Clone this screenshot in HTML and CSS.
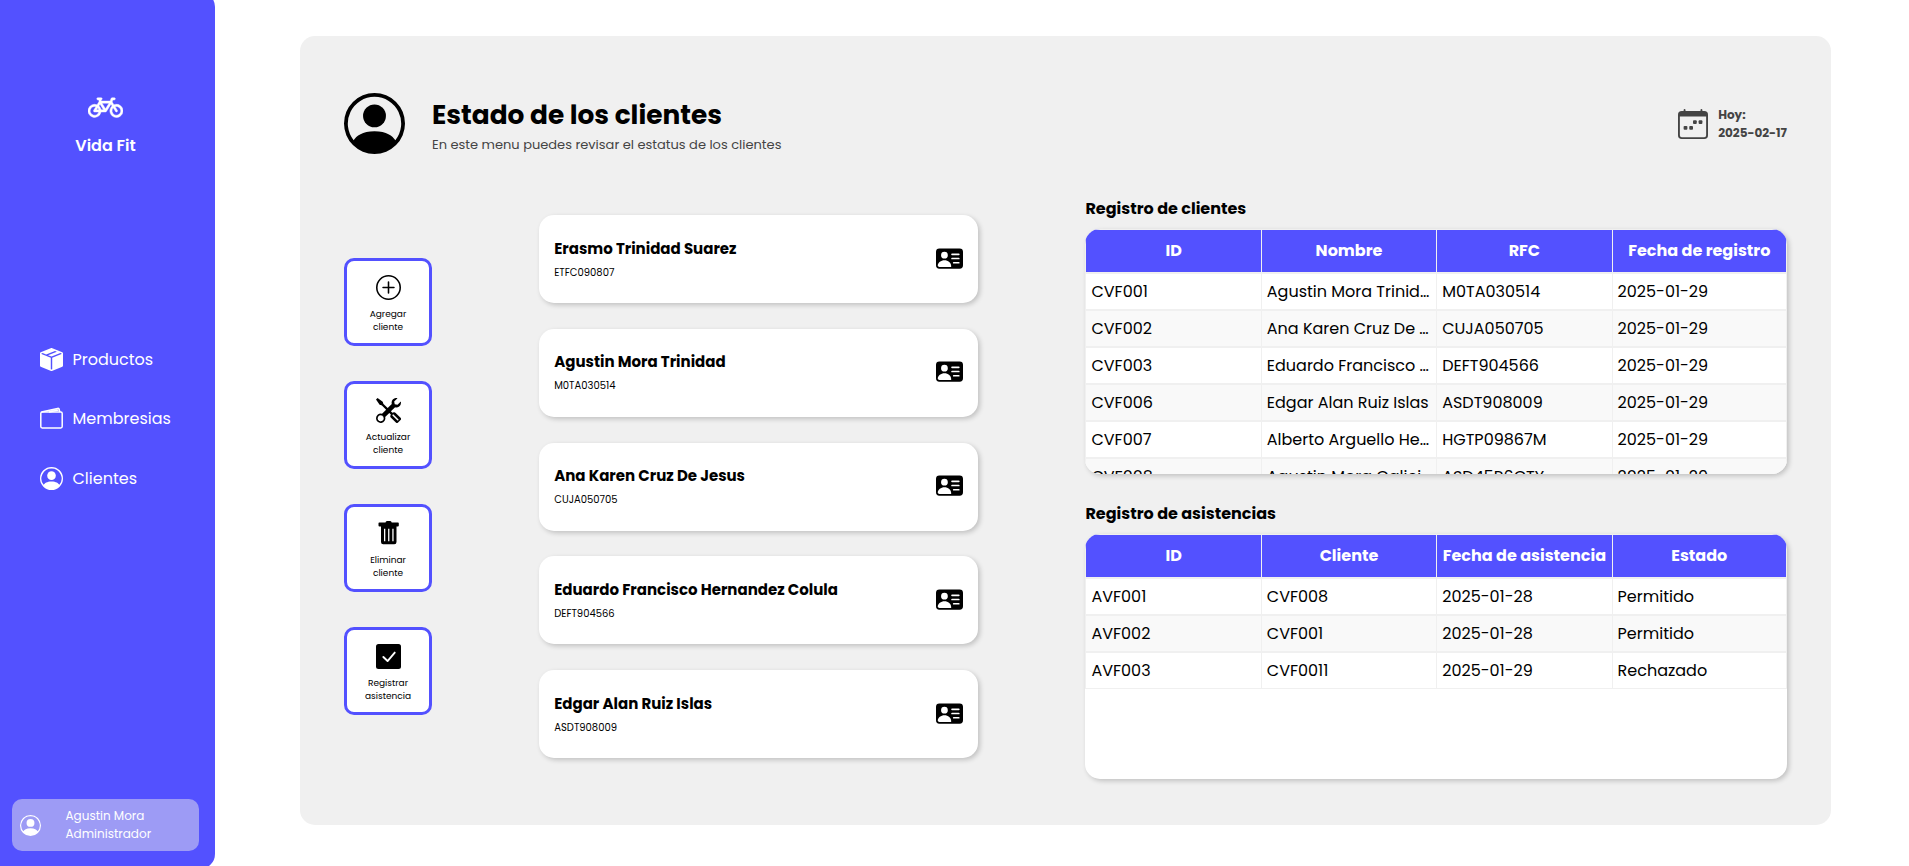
FILE: index.html
```html
<!DOCTYPE html>
<html lang="es">

<head>
  <meta charset="UTF-8">
  <meta name="viewport" content="width=device-width, initial-scale=1.0">
  <title>Vida Fit - Clientes</title>
  <link rel="stylesheet" href="styles.css">
</head>

<body>
  <!-- Iconos reutilizables -->
  <svg class="sprite">
    <symbol id="icon-person" viewBox="0 0 16 16">
      <path d="M11 6a3 3 0 1 1-6 0 3 3 0 0 1 6 0" />
      <path fill-rule="evenodd" d="M0 8a8 8 0 1 1 16 0A8 8 0 0 1 0 8m8-7a7 7 0 0 0-5.468 11.37C3.242 11.226 4.805 10 8 10s4.757 1.225 5.468 2.37A7 7 0 0 0 8 1" />
    </symbol>
    <symbol id="icon-card" viewBox="0 0 16 16">
      <path d="M0 4a2 2 0 0 1 2-2h12a2 2 0 0 1 2 2v8a2 2 0 0 1-2 2H2a2 2 0 0 1-2-2zm9 1.5a.5.5 0 0 0 .5.5h4a.5.5 0 0 0 0-1h-4a.5.5 0 0 0-.5.5M9 8a.5.5 0 0 0 .5.5h4a.5.5 0 0 0 0-1h-4A.5.5 0 0 0 9 8m1 2.5a.5.5 0 0 0 .5.5h3a.5.5 0 0 0 0-1h-3a.5.5 0 0 0-.5.5m-1 2C9 10.567 7.21 9 5 9c-2.086 0-3.8 1.398-3.984 3.181A1 1 0 0 0 2 13h6.96q.04-.245.04-.5M7 6a2 2 0 1 0-4 0 2 2 0 0 0 4 0" />
    </symbol>
  </svg>

  <aside class="sidebar">
    <div class="logo">
      <svg class="logo-icon" viewBox="0 0 16 16">
        <path stroke="#fff" stroke-width=".2" d="M4 4.5a.5.5 0 0 1 .5-.5H6a.5.5 0 0 1 0 1v.5h4.14l.386-1.158A.5.5 0 0 1 11 4h1a.5.5 0 0 1 0 1h-.64l-.311.935.807 1.29a3 3 0 1 1-.848.53l-.508-.812-2.076 3.322A.5.5 0 0 1 8 10.5H5.959a3 3 0 1 1-1.815-3.274L5 5.856V5h-.5a.5.5 0 0 1-.5-.5m1.5 2.443-.508.814c.5.444.85 1.054.967 1.743h1.139zM8 9.057 9.598 6.5H6.402zM4.937 9.5a2 2 0 0 0-.487-.877l-.548.877zM3.603 8.092A2 2 0 1 0 4.937 10.5H3a.5.5 0 0 1-.424-.765zm7.947.53a2 2 0 1 0 .848-.53l1.026 1.643a.5.5 0 1 1-.848.53z" />
      </svg>
      <h2>Vida Fit</h2>
    </div>
    <nav class="menu">
      <a class="menu-item" href="#">
        <svg viewBox="0 0 16 16">
          <path fill-rule="evenodd" d="M15.528 2.973a.75.75 0 0 1 .472.696v8.662a.75.75 0 0 1-.472.696l-7.25 2.9a.75.75 0 0 1-.557 0l-7.25-2.9A.75.75 0 0 1 0 12.331V3.669a.75.75 0 0 1 .471-.696L7.443.184l.01-.003.268-.108a.75.75 0 0 1 .558 0l.269.108.01.003zM10.404 2 4.25 4.461 1.846 3.5 1 3.839v.4l6.5 2.6v7.922l.5.2.5-.2V6.84l6.5-2.6v-.4l-.846-.339L8 5.961 5.596 5l6.154-2.461z" />
        </svg>
        <span>Productos</span>
      </a>
      <a class="menu-item" href="#">
        <svg viewBox="0 0 23 23">
          <g fill="none" stroke="#fff" stroke-width="1.5" stroke-linejoin="round">
            <rect x=".8" y="5" width="21.4" height="16" rx="1.4" />
            <path d="M1.5 5 17.6 1.4c.9-.2 1.4.1 1.6.9l.6 2.7M9 5l9.4-2" />
          </g>
        </svg>
        <span>Membresias</span>
      </a>
      <a class="menu-item" href="#">
        <svg><use href="#icon-person" /></svg>
        <span>Clientes</span>
      </a>
    </nav>
    <div class="user">
      <svg><use href="#icon-person" /></svg>
      <div>
        <p>Agustin Mora</p>
        <p>Administrador</p>
      </div>
    </div>
  </aside>

  <main class="panel">
    <header class="header">
      <svg class="header-icon"><use href="#icon-person" /></svg>
      <div class="header-text">
        <h1>Estado de los clientes</h1>
        <p>En este menu puedes revisar el estatus de los clientes</p>
      </div>
      <div class="today">
        <svg viewBox="0 0 16 16">
          <path fill-rule="evenodd" d="M3.5 0a.5.5 0 0 1 .5.5V1h8V.5a.5.5 0 0 1 1 0V1h1a2 2 0 0 1 2 2v11a2 2 0 0 1-2 2H2a2 2 0 0 1-2-2V3a2 2 0 0 1 2-2h1V.5a.5.5 0 0 1 .5-.5M1 4v10a1 1 0 0 0 1 1h12a1 1 0 0 0 1-1V4z" />
          <rect x="11" y="6" width="2" height="2" rx=".5" />
          <rect x="8" y="6" width="2" height="2" rx=".5" />
          <rect x="3" y="9" width="2" height="2" rx=".5" />
          <rect x="6" y="9" width="2" height="2" rx=".5" />
        </svg>
        <div>
          <p>Hoy:</p>
          <p>2025-02-17</p>
        </div>
      </div>
    </header>

    <section class="content">
      <div class="actions">
        <button class="action">
          <svg viewBox="0 0 16 16">
            <path d="M8 15A7 7 0 1 1 8 1a7 7 0 0 1 0 14m0 1A8 8 0 1 0 8 0a8 8 0 0 0 0 16" />
            <path d="M8 4a.5.5 0 0 1 .5.5v3h3a.5.5 0 0 1 0 1h-3v3a.5.5 0 0 1-1 0v-3h-3a.5.5 0 0 1 0-1h3v-3A.5.5 0 0 1 8 4" />
          </svg>
          <span>Agregar<br>cliente</span>
        </button>
        <button class="action">
          <svg viewBox="0 0 16 16">
            <path fill-rule="evenodd" d="M1 0 0 1l2.2 3.081a1 1 0 0 0 .815.419h.07a1 1 0 0 1 .708.293l2.675 2.675-2.617 2.654A3.003 3.003 0 0 0 0 13a3 3 0 1 0 5.878-.851l2.654-2.617.968.968-.305.914a1 1 0 0 0 .242 1.023l3.27 3.27a.997.997 0 0 0 1.414 0l1.586-1.586a.997.997 0 0 0 0-1.414l-3.27-3.27a1 1 0 0 0-1.023-.242L10.5 9.5l-.96-.96 2.68-2.643A3.005 3.005 0 0 0 16 3q0-.405-.102-.777l-2.14 2.141L12 4l-.364-1.757L13.777.102a3 3 0 0 0-3.675 3.68L7.462 6.46 4.793 3.793a1 1 0 0 1-.293-.707v-.071a1 1 0 0 0-.419-.814zm9.646 10.646a.5.5 0 0 1 .708 0l2.914 2.915a.5.5 0 0 1-.707.707l-2.915-2.914a.5.5 0 0 1 0-.708M3 11l.471.242.529.026.287.445.445.287.026.529L5 13l-.242.471-.026.529-.445.287-.287.445-.529.026L3 15l-.471-.242L2 14.732l-.287-.445L1.268 14l-.026-.529L1 13l.242-.471.026-.529.445-.287.287-.445.529-.026z" />
          </svg>
          <span>Actualizar<br>cliente</span>
        </button>
        <button class="action">
          <svg viewBox="0 0 25 25">
            <path fill-rule="evenodd" d="M9.5 1.5Q9.7 0 11 0h3.2q1.3 0 1.5 1.5h6.3a.8.8 0 0 1 .8.8v2.2a1 1 0 0 1-1 1h-1.3V21a2.2 2.2 0 0 1-2.2 2.2H7.2A2.2 2.2 0 0 1 5 21V5.5H3.5a1 1 0 0 1-1-1V2.3a.8.8 0 0 1 .8-.8zM8 7.8v12.4h1.3V7.8zm4.1 0v12.4h1.3V7.8zm4.2 0v12.4h1.3V7.8z" />
          </svg>
          <span>Eliminar<br>cliente</span>
        </button>
        <button class="action">
          <svg viewBox="0 0 16 16">
            <rect width="16" height="16" rx="1.6" />
            <path d="m4.7 8.3 2.7 2.6 4.600-5.4" fill="none" stroke="#fff" stroke-width="1.2" stroke-linecap="round" stroke-linejoin="round" />
          </svg>
          <span>Registrar<br>asistencia</span>
        </button>
      </div>

      <div class="clients">
        <article class="client">
          <div>
            <h3>Erasmo Trinidad Suarez</h3>
            <p>ETFC090807</p>
          </div>
          <svg><use href="#icon-card" /></svg>
        </article>
        <article class="client">
          <div>
            <h3>Agustin Mora Trinidad</h3>
            <p>M0TA030514</p>
          </div>
          <svg><use href="#icon-card" /></svg>
        </article>
        <article class="client">
          <div>
            <h3>Ana Karen Cruz De Jesus</h3>
            <p>CUJA050705</p>
          </div>
          <svg><use href="#icon-card" /></svg>
        </article>
        <article class="client">
          <div>
            <h3>Eduardo Francisco Hernandez Colula</h3>
            <p>DEFT904566</p>
          </div>
          <svg><use href="#icon-card" /></svg>
        </article>
        <article class="client">
          <div>
            <h3>Edgar Alan Ruiz Islas</h3>
            <p>ASDT908009</p>
          </div>
          <svg><use href="#icon-card" /></svg>
        </article>
      </div>

      <div class="records">
        <h4>Registro de clientes</h4>
        <div class="table-box">
          <table>
            <thead>
              <tr><th>ID</th><th>Nombre</th><th>RFC</th><th>Fecha de registro</th></tr>
            </thead>
            <tbody>
              <tr><td>CVF001</td><td>Agustin Mora Trinidad</td><td>M0TA030514</td><td>2025-01-29</td></tr>
              <tr><td>CVF002</td><td>Ana Karen Cruz De Jesus</td><td>CUJA050705</td><td>2025-01-29</td></tr>
              <tr><td>CVF003</td><td>Eduardo Francisco Hernandez Colula</td><td>DEFT904566</td><td>2025-01-29</td></tr>
              <tr><td>CVF006</td><td>Edgar Alan Ruiz Islas</td><td>ASDT908009</td><td>2025-01-29</td></tr>
              <tr><td>CVF007</td><td>Alberto Arguello Hernandez</td><td>HGTP09867M</td><td>2025-01-29</td></tr>
              <tr><td>CVF008</td><td>Agustin Mora Galicia Perez</td><td>ASD45R6GTY</td><td>2025-01-29</td></tr>
            </tbody>
          </table>
        </div>

        <h4>Registro de asistencias</h4>
        <div class="table-box">
          <table>
            <thead>
              <tr><th>ID</th><th>Cliente</th><th>Fecha de asistencia</th><th>Estado</th></tr>
            </thead>
            <tbody>
              <tr><td>AVF001</td><td>CVF008</td><td>2025-01-28</td><td>Permitido</td></tr>
              <tr><td>AVF002</td><td>CVF001</td><td>2025-01-28</td><td>Permitido</td></tr>
              <tr><td>AVF003</td><td>CVF0011</td><td>2025-01-29</td><td>Rechazado</td></tr>
            </tbody>
          </table>
        </div>
      </div>
    </section>
  </main>
</body>

</html>
```
FILE: styles.css
```css
* {
  margin: 0;
  padding: 0;
  box-sizing: border-box;
  font-family: 'Poppins', 'Inter', sans-serif;
}

body {
  display: flex;
  height: 100vh;
  overflow: hidden;
  background-color: #fff;
  color: #000;
  line-height: 1.5;
}

svg {
  display: block;
  flex-shrink: 0;
  fill: currentColor;
}

.sprite {
  display: none;
}

/* Barra lateral */
.sidebar {
  display: flex;
  flex-direction: column;
  width: 215px;
  height: 877px;
  margin-top: -8px;
  padding: 97px 16px 18px 12px;
  border-radius: 15px;
  border-top-left-radius: 0;
  border-bottom-left-radius: 0;
  background-color: #5351ff;
  color: #fff;
  flex-shrink: 0;
}

.logo {
  display: flex;
  flex-direction: column;
  align-items: center;
}

.logo-icon {
  width: 35px;
  height: 35px;
}

.logo h2 {
  margin-top: 10px;
  font-size: 16px;
  font-weight: 600;
}

.menu {
  display: flex;
  flex-direction: column;
  gap: 34.5px;
  margin: 188.8px 0 0 28px;
}

.menu-item {
  display: flex;
  align-items: center;
  gap: 9.5px;
  color: #fff;
  font-size: 16px;
  text-decoration: none;
}

.menu-item span {
  padding-top: 1px;
}

.menu-item svg {
  width: 23px;
  height: 23px;
}

.user {
  display: flex;
  align-items: center;
  gap: 24.5px;
  height: 52px;
  margin-top: auto;
  padding-left: 8px;
  border-radius: 10px;
  background-color: #9d9bf5;
  font-size: 12px;
}

.user svg {
  width: 21px;
  height: 21px;
}

/* Panel principal */
.panel {
  width: 1531px;
  height: 789px;
  margin: 36px 0 0 85px;
  padding: 57px 44px 0;
  border-radius: 15px;
  background-color: #f0f0f0;
}

.header {
  display: flex;
  align-items: center;
  height: 61px;
}

.header-icon {
  width: 61px;
  height: 61px;
}

.header-text {
  margin-left: 27px;
  padding-top: 3px;
}

.header-text h1 {
  font-size: 26.4px;
  line-height: 38px;
}

.header-text p {
  padding-top: 1px;
  color: #444;
  font-size: 13px;
}

.today {
  display: flex;
  align-items: center;
  gap: 10px;
  margin-left: auto;
  padding-top: 1px;
  color: #444;
  font-size: 12px;
  font-weight: 700;
}

.today svg {
  width: 30px;
  height: 30px;
}

.content {
  display: flex;
  justify-content: space-between;
}

/* Botones de acciones */
.actions {
  display: flex;
  flex-direction: column;
  gap: 35px;
  padding-top: 104px;
}

.action {
  display: flex;
  flex-direction: column;
  align-items: center;
  width: 88px;
  height: 88px;
  padding-top: 14px;
  border: 3px solid #5351ff;
  border-radius: 10px;
  background-color: #fff;
  color: #000;
  font-size: 9px;
  line-height: 13px;
  cursor: pointer;
}

.action svg {
  width: 25px;
  height: 25px;
  margin-bottom: 8px;
}

/* Tarjetas de clientes */
.clients {
  display: flex;
  flex-direction: column;
  gap: 25.8px;
  width: 439px;
  padding-top: 61px;
}

.client {
  display: flex;
  align-items: center;
  justify-content: space-between;
  height: 88px;
  padding: 0 15px;
  border-radius: 15px;
  background-color: #fff;
  box-shadow: 2px 2px 5px rgba(0, 0, 0, 0.2);
}

.client h3 {
  font-size: 15px;
  line-height: 26px;
}

.client p {
  padding-top: 1px;
  font-size: 10px;
  line-height: 20px;
}

.client svg {
  width: 27px;
  height: 27px;
  margin-bottom: 2px;
}

/* Tablas de registros */
.records {
  width: 701.6px;
  padding-top: 43px;
}

.records h4 {
  height: 32px;
  font-size: 16px;
}

.table-box {
  height: 245px;
  margin-bottom: 28px;
  overflow: hidden;
  border-radius: 15px;
  background-color: #fff;
  box-shadow: 2px 2px 5px rgba(0, 0, 0, 0.2);
}

table {
  width: 100%;
  table-layout: fixed;
  border-collapse: separate;
  border-spacing: 0;
}

th,
td {
  height: 37px;
  padding: 0 5px;
  border: 1px solid #f0f0f0;
  border-right: none;
  overflow: hidden;
  font-size: 16px;
  text-overflow: ellipsis;
  white-space: nowrap;
}

th:last-child,
td:last-child {
  border-right: 1px solid #f0f0f0;
}

th {
  height: 44px;
  background-color: #5351ff;
  color: #fff;
  text-align: center;
}

tbody tr:nth-child(even) {
  background-color: #f9f9f9;
}
```
